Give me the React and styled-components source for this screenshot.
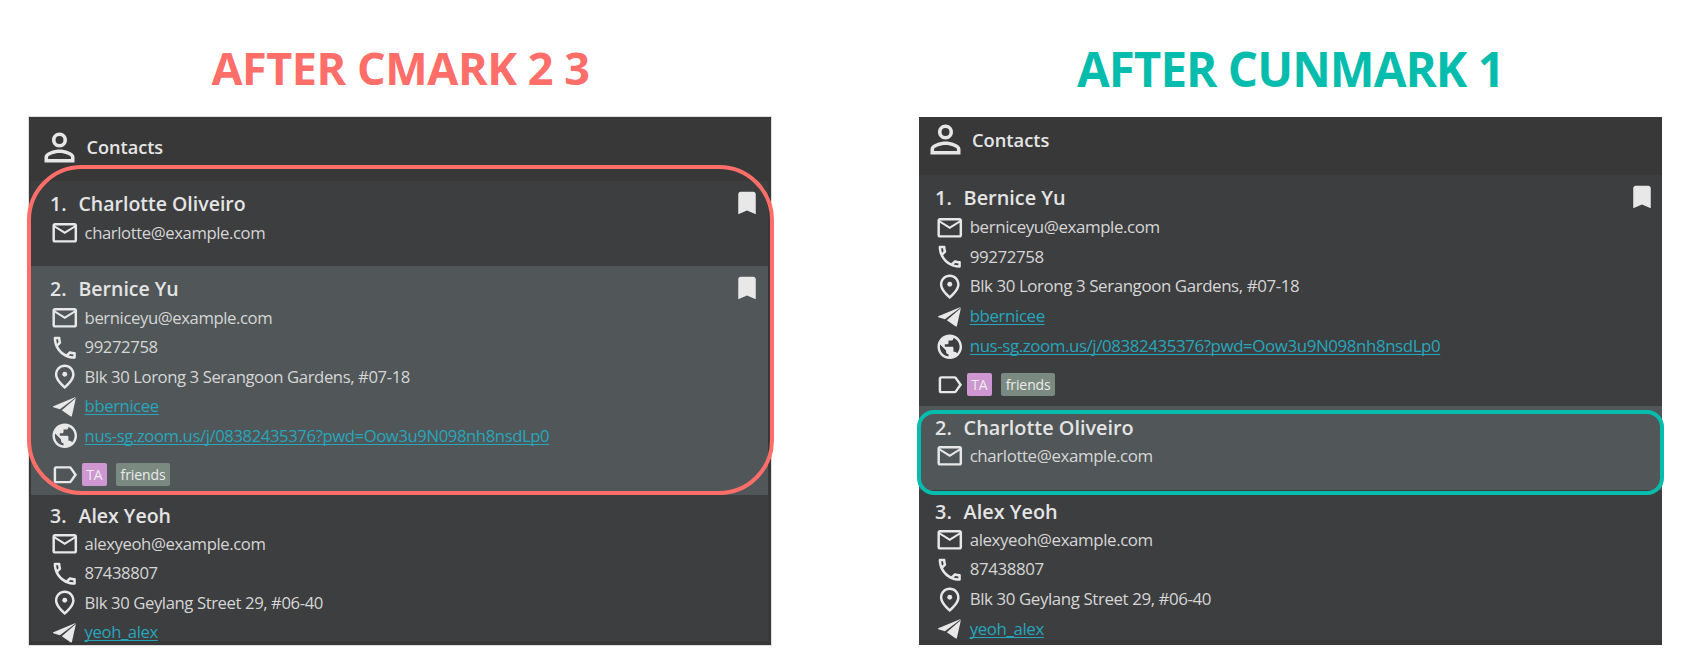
import React from "react";
import styled, { createGlobalStyle } from "styled-components";
import {
  MdPersonOutline,
  MdMailOutline,
  MdOutlinePhone,
  MdPublic,
  MdLabelOutline,
  MdBookmark,
} from "react-icons/md";

const GlobalStyle = createGlobalStyle`
  * { box-sizing: border-box; }
  body {
    margin: 0;
    background: #fff;
    font-family: "Open Sans", "Noto Sans", sans-serif;
  }
`;

const Page = styled.main`
  display: flex;
  justify-content: space-between;
  width: 1683px;
  height: 664px;
  padding: 0 21px 0 29px;
  overflow: hidden;
`;

const Column = styled.section`
  display: flex;
  flex-direction: column;
  width: ${(p) => p.$width}px;
`;

const Title = styled.h1`
  display: flex;
  align-items: center;
  justify-content: center;
  height: 117px;
  margin: 0;
  padding: ${(p) => p.$padding};
  color: ${(p) => p.$color};
  font-size: ${(p) => p.$size}px;
  font-weight: 700;
  letter-spacing: ${(p) => p.$spacing}px;
  white-space: nowrap;
`;

const Panel = styled.div`
  position: relative;
  display: flex;
  flex-direction: column;
  height: 528px;
  padding: ${(p) => p.$padding};
  background: #383838;
  box-shadow: ${(p) => (p.$edged ? "0 0 0 1px #dedede" : "none")};
`;

const PanelHeader = styled.header`
  display: flex;
  flex: none;
  align-items: center;
  gap: ${(p) => p.$gap}px;
  height: ${(p) => p.$height}px;
  padding: ${(p) => p.$padding};
  color: #e6e6e6;
  font-size: ${(p) => p.$size}px;
  font-weight: 600;
  svg { flex: none; }
`;

const List = styled.div`
  display: flex;
  flex: 1;
  flex-direction: column;
  min-height: 0;
`;

const Card = styled.article`
  display: flex;
  flex: none;
  justify-content: space-between;
  height: ${(p) => p.$height}px;
  padding: ${(p) => p.$top}px ${(p) => p.$right}px 0 ${(p) => p.$left}px;
  background: ${(p) => (p.$shaded ? "#515658" : "#3d3e40")};
`;

const Details = styled.div`
  display: flex;
  flex-direction: column;
`;

const Name = styled.div`
  display: grid;
  flex: none;
  grid-template-columns: 28.5px auto;
  align-items: center;
  height: ${(p) => p.$height}px;
  margin-bottom: 0.8px;
  padding-left: 0.4px;
  color: #e4e4e4;
  font-size: ${(p) => p.$size}px;
  font-weight: 600;
  white-space: nowrap;
`;

const Field = styled.div`
  display: flex;
  flex: none;
  align-items: center;
  gap: 5px;
  height: ${(p) => p.$height}px;
  color: #d6d6d6;
  font-size: ${(p) => p.$size}px;
  letter-spacing: -0.41px;
  line-height: 1;
  white-space: nowrap;
`;

const IconSlot = styled.span`
  display: flex;
  flex: none;
  align-items: center;
  justify-content: center;
  width: 30px;
  height: 30px;
  color: #e8e8e8;
`;

const BookmarkSlot = styled(IconSlot)`
  margin-top: -2px;
`;

const Link = styled.a`
  color: #26a6bc;
  text-decoration: underline;
  text-decoration-thickness: 1px;
  text-underline-offset: 2px;
  text-decoration-skip-ink: none;
`;

const TagRow = styled.div`
  display: flex;
  align-items: center;
  height: 23px;
  margin-top: 12px;
`;

const Tag = styled.span`
  display: flex;
  align-items: center;
  justify-content: center;
  width: ${(p) => p.$width}px;
  height: 23px;
  margin-right: 9px;
  margin-left: ${(p) => (p.$first ? 2 : 0)}px;
  border-radius: 2px;
  background: ${(p) => p.$color};
  color: #ececec;
  font-size: 14px;
  font-weight: 500;
  letter-spacing: -0.1px;
`;

const Highlight = styled.div`
  position: absolute;
  top: ${(p) => p.$top}px;
  left: -2px;
  width: ${(p) => p.$width}px;
  height: ${(p) => p.$height}px;
  border: 4px solid ${(p) => p.$color};
  border-radius: ${(p) => p.$radius}px;
`;

const PinIcon = () => (
  <svg width="29.5" height="29.5" viewBox="0 0 24 24" fill="currentColor">
    <path
      fillRule="evenodd"
      d="M12 2c4.2 0 8 3.22 8 8.2 0 3.32-2.67 7.25-8 11.8-5.33-4.55-8-8.48-8-11.8C4 5.22 7.8 2 12 2zm0 2c-3.35 0-6 2.57-6 6.2 0 2.34 1.95 5.44 6 9.14 4.05-3.7 6-6.8 6-9.14C18 6.57 15.35 4 12 4z"
    />
    <circle cx="12" cy="10" r="2" />
  </svg>
);

const PlaneIcon = () => (
  <svg width="23" height="20" viewBox="0 0 23 20" fill="currentColor">
    <path d="M.3 9.2 22 .2q.7-.2.5.2L6.9 12.3.3 10.3q-.6-.5 0-1.1z" />
    <path d="M22.9.9 18.9 19q-.3.9-1.1.4L8.8 13.3z" />
  </svg>
);

const icons = {
  email: <MdMailOutline size={29.5} />,
  phone: <MdOutlinePhone size={29.5} />,
  address: <PinIcon />,
  telegram: <PlaneIcon />,
  meeting: <MdPublic size={29.5} />,
};

const bernice = {
  name: "Bernice Yu",
  fields: [
    ["email", "berniceyu@example.com"],
    ["phone", "99272758"],
    ["address", "Blk 30 Lorong 3 Serangoon Gardens, #07-18"],
    ["telegram", "bbernicee"],
    ["meeting", "nus-sg.zoom.us/j/08382435376?pwd=Oow3u9N098nh8nsdLp0"],
  ],
  tags: [
    { label: "TA", color: "#cf97d1", width: 25.5 },
    { label: "friends", color: "#7a8a80", width: 54 },
  ],
};

const charlotte = {
  name: "Charlotte Oliveiro",
  fields: [["email", "charlotte@example.com"]],
};

const alex = {
  name: "Alex Yeoh",
  fields: [
    ["email", "alexyeoh@example.com"],
    ["phone", "87438807"],
    ["address", "Blk 30 Geylang Street 29, #06-40"],
    ["telegram", "yeoh_alex"],
  ],
};

const marked = {
  left: 18.6,
  right: 5.6,
  line: 29.5,
  text: 16.7,
  name: 19.5,
  rows: [
    { person: charlotte, height: 85, top: 9.3, nameHeight: 27.3, bookmark: true },
    { person: bernice, height: 229, top: 9.3, nameHeight: 27.3, shaded: true, bookmark: true },
    { person: alex, height: 146, top: 7.3, nameHeight: 26.3 },
  ],
};

const unmarked = {
  left: 15.7,
  right: 5.5,
  line: 29.8,
  text: 16.9,
  name: 19.85,
  rows: [
    { person: bernice, height: 231, top: 8.8, nameHeight: 27.8, bookmark: true },
    { person: charlotte, height: 83.7, top: 7.8, nameHeight: 26.5, shaded: true },
    { person: alex, height: 150.3, top: 7.9, nameHeight: 26.8 },
  ],
};

function ContactCard({ row, index, metrics }) {
  const { person } = row;
  return (
    <Card
      $height={row.height}
      $top={row.top}
      $left={metrics.left}
      $right={metrics.right}
      $shaded={row.shaded}
    >
      <Details>
        <Name $height={row.nameHeight} $size={metrics.name}>
          <span>{index}.</span>
          <span>{person.name}</span>
        </Name>
        {person.fields.map(([kind, value]) => (
          <Field key={kind} $height={metrics.line} $size={metrics.text}>
            <IconSlot>{icons[kind]}</IconSlot>
            {kind === "telegram" || kind === "meeting" ? (
              <Link>{value}</Link>
            ) : (
              <span>{value}</span>
            )}
          </Field>
        ))}
        {person.tags && (
          <TagRow>
            <IconSlot>
              <MdLabelOutline size={29.5} />
            </IconSlot>
            {person.tags.map((tag, i) => (
              <Tag key={tag.label} $first={i === 0} $color={tag.color} $width={tag.width}>
                {tag.label}
              </Tag>
            ))}
          </TagRow>
        )}
      </Details>
      {row.bookmark && (
        <BookmarkSlot>
          <MdBookmark size={30} />
        </BookmarkSlot>
      )}
    </Card>
  );
}

const ContactList = ({ metrics }) => (
  <List>
    {metrics.rows.map((row, i) => (
      <ContactCard key={row.person.name} row={row} index={i + 1} metrics={metrics} />
    ))}
  </List>
);

export default function App() {
  return (
    <Page>
      <GlobalStyle />
      <Column $width={742}>
        <Title $color="#ff6e68" $size={45} $spacing={-0.45} $padding="18px 0 0 1px">
          AFTER CMARK 2 3
        </Title>
        <Panel $padding="0 3px 4px 2px" $edged>
          <PanelHeader $height={64} $padding="0 0 4px 6px" $gap={4.5} $size={18.1}>
            <MdPersonOutline size={45} />
            Contacts
          </PanelHeader>
          <ContactList metrics={marked} />
          <Highlight $color="#ff6e68" $top={47.5} $width={746.5} $height={330} $radius={55} />
        </Panel>
      </Column>
      <Column $width={743}>
        <Title $color="#06bdad" $size={47.5} $spacing={-0.95} $padding="20px 0 0 0">
          AFTER CUNMARK 1
        </Title>
        <Panel $padding="0 0 5px 0">
          <PanelHeader $height={58} $padding="0 0 13px 3.5px" $gap={4.5} $size={18.3}>
            <MdPersonOutline size={45} />
            Contacts
          </PanelHeader>
          <ContactList metrics={unmarked} />
          <Highlight $color="#06bdad" $top={292.5} $width={747} $height={85} $radius={17} />
        </Panel>
      </Column>
    </Page>
  );
}
